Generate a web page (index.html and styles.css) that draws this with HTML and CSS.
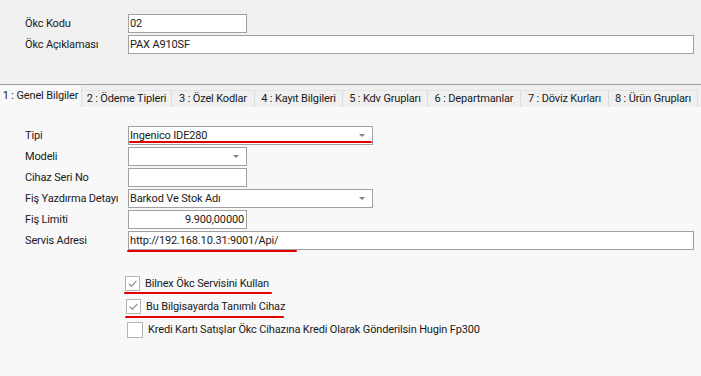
FILE: index.html
```html
<!DOCTYPE html>
<html lang="tr">
<head>
<meta charset="utf-8">
<link rel="stylesheet" href="styles.css">
</head>
<body>
<div class="header">
  <div class="row"><label class="lbl">Ökc Kodu</label><div class="field w-short">02</div></div>
  <div class="row"><label class="lbl">Ökc Açıklaması</label><div class="field w-full">PAX A910SF</div></div>
</div>
<div class="tabs">
  <div class="tab active t1">1 : Genel Bilgiler</div>
  <div class="tab t2">2 : Ödeme Tipleri</div>
  <div class="tab t3">3 : Özel Kodlar</div>
  <div class="tab t4">4 : Kayıt Bilgileri</div>
  <div class="tab t5">5 : Kdv Grupları</div>
  <div class="tab t6">6 : Departmanlar</div>
  <div class="tab t7">7 : Döviz Kurları</div>
  <div class="tab t8">8 : Ürün Grupları</div>
</div>
<div class="content">
  <div class="form">
    <div class="row"><label class="lbl">Tipi</label><div class="field combo w-mid"><span>Ingenico IDE280</span><i class="arrow"></i><b class="mark mark-tipi"></b></div></div>
    <div class="row"><label class="lbl">Modeli</label><div class="field combo w-short"><span></span><i class="arrow"></i></div></div>
    <div class="row"><label class="lbl">Cihaz Seri No</label><div class="field w-short"></div></div>
    <div class="row"><label class="lbl">Fiş Yazdırma Detayı</label><div class="field combo w-mid"><span>Barkod Ve Stok Adı</span><i class="arrow"></i></div></div>
    <div class="row"><label class="lbl">Fiş Limiti</label><div class="field w-short num">9.900,00000</div></div>
    <div class="row"><label class="lbl">Servis Adresi</label><div class="field w-full">http://192.168.10.31:9001/Api/<b class="mark mark-url"></b></div></div>
  </div>
  <div class="checks">
    <div class="check c1"><span class="box"><svg viewBox="0 0 14 14"><path d="M3 7.2 L5.8 10 L11.2 4.2" /></svg></span><span class="ctext">Bilnex Ökc Servisini Kullan</span><b class="mark mark-c1"></b></div>
    <div class="check c2"><span class="box"><svg viewBox="0 0 14 14"><path d="M3 7.2 L5.8 10 L11.2 4.2" /></svg></span><span class="ctext">Bu Bilgisayarda Tanımlı Cihaz</span><b class="mark mark-c2"></b></div>
    <div class="check c3"><span class="box box-lg"></span><span class="ctext">Kredi Kartı Satışlar Ökc Cihazına Kredi Olarak Gönderilsin Hugin Fp300</span></div>
  </div>
</div>
</body>
</html>
```
FILE: styles.css
```css
* { box-sizing: border-box; }
html, body { margin: 0; padding: 0; }
body {
  width: 701px;
  height: 376px;
  overflow: hidden;
  background: #f8f8f8;
  font-family: Roboto, "Liberation Sans", sans-serif;
  font-size: 11px;
  letter-spacing: -0.15px;
  color: #1a1a1a;
}
.header {
  background: #f0f0f0;
  height: 85px;
  padding-top: 14px;
  display: flex;
  flex-direction: column;
  gap: 2px;
  border-bottom: 1px solid #a0a0a0;
}
.row {
  display: flex;
  align-items: center;
  height: 19px;
}
.lbl {
  width: 128px;
  padding-left: 25px;
  flex: none;
  white-space: nowrap;
}
.field {
  position: relative;
  height: 19px;
  border: 1px solid #a0a0a0;
  background: #fff;
  padding: 0 1px;
  line-height: 17px;
  white-space: nowrap;
}
.w-short { width: 119px; }
.w-mid { width: 245px; }
.w-full { width: 566px; }
.num { text-align: right; padding-right: 2px; }
.combo { display: flex; justify-content: space-between; align-items: center; }
.arrow {
  width: 0; height: 0;
  margin-right: 6px;
  border-left: 3px solid transparent;
  border-right: 3px solid transparent;
  border-top: 3px solid #808080;
}
.tabs {
  display: flex;
  height: 22px;
  background: #f0f0f0;
  padding-top: 4px;
  align-items: flex-end;
}
.tab {
  height: 17px;
  line-height: 16px;
  background: #f0f0f0;
  border-right: 1px solid #dcdcdc;
  border-top: 1px solid #e4e4e4;
  white-space: nowrap;
  text-align: center;
  color: #1a1a1a;
  flex: none;
}
.tab.active {
  height: 21px;
  line-height: 18px;
  background: #f8f8f8;
  border-top: 1px solid #fff;
  border-right: 1px solid #d8d8d8;
}
.t1 { width: 82px; }
.t2 { width: 90px; }
.t3 { width: 83px; }
.t4 { width: 88px; }
.t5 { width: 85px; }
.t6 { width: 93px; }
.t7 { width: 88px; }
.t8 { width: 89px; }
.content {
  padding-top: 19px;
}
.form {
  display: flex;
  flex-direction: column;
  gap: 2px;
}
.mark {
  position: absolute;
  height: 2px;
  background: #e00000;
  border-radius: 1px;
}
.mark-tipi { left: 0; bottom: 1px; width: 243px; }
.mark-url { left: -2px; bottom: -3px; width: 170px; }
.checks {
  padding-top: 22px;
  display: flex;
  flex-direction: column;
}
.check {
  position: relative;
  display: flex;
  align-items: center;
  height: 23px;
  padding-left: 125px;
  gap: 5px;
}
.check.c2 { padding-left: 126px; }
.check.c3 { padding-left: 127px; }
.box {
  width: 15px;
  height: 15px;
  border: 1px solid #b4b4b4;
  background: #fff;
  display: flex;
  flex: none;
}
.box svg { width: 13px; height: 13px; }
.box path { fill: none; stroke: #909090; stroke-width: 1.3; }
.box-lg { width: 16px; height: 16px; }
.mark-c1 { left: 124px; bottom: 1px; width: 148px; }
.mark-c2 { left: 125px; bottom: 0; width: 159px; }
```
